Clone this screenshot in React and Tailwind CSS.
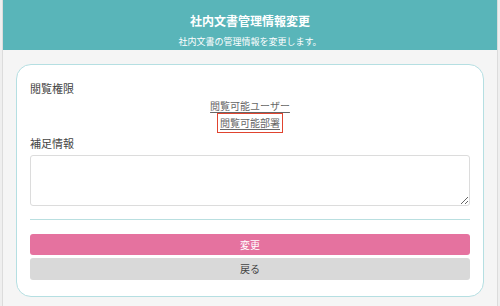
import React from "react";

// Edit form for internal document management info
function App() {
  return (
    <div
      className="w-[500px] h-[306px] bg-[#efefef] px-[2px] overflow-hidden"
      style={{ fontFamily: '"Noto Sans CJK JP", "Noto Sans", sans-serif' }}
    >
      <div className="h-full bg-[#f5f5f5] border-x border-[#dcdcdc]">
        {/* Header */}
        <div className="h-[50px] bg-[#59b5b9] text-white flex flex-col items-center">
          <div className="mt-[13px] h-[16px] leading-[16px] text-[12px] font-bold">
            社内文書管理情報変更
          </div>
          <div className="mt-[7px] h-[12px] leading-[12px] text-[9px]">
            社内文書の管理情報を変更します。
          </div>
        </div>

        {/* Card */}
        <div className="mx-[13px] mt-[14px] bg-white border border-[#b5dfe2] rounded-[15px] px-[13px] pt-[15px] pb-[16px]">
          <div className="h-[16px] leading-[16px] text-[11px] text-[#444]">閲覧権限</div>

          <div className="flex flex-col items-center text-[10px] text-[#666]">
            <div className="mt-[2px] h-[15px] leading-[15px] underline underline-offset-2">
              閲覧可能ユーザー
            </div>
            <div className="h-[20px] leading-[18px] border border-[#e0442f] px-[2px] underline underline-offset-2">
              閲覧可能部署
            </div>
          </div>

          <div className="mt-[2px] h-[16px] leading-[16px] text-[11px] text-[#444]">補足情報</div>

          <textarea className="mt-[4px] block w-full h-[51px] border border-[#dcdcdc] rounded-[3px] bg-white resize-y" />

          <div className="mt-[13px] border-t border-[#b9dfe0]" />

          <button className="mt-[14px] block w-full h-[21px] rounded-[3px] bg-[#e5729f] text-white text-[10px] leading-[21px]">
            変更
          </button>
          <button className="mt-[3px] block w-full h-[22px] rounded-[3px] bg-[#d9d9d9] text-[#444] text-[10px] leading-[22px]">
            戻る
          </button>
        </div>
      </div>
    </div>
  );
}

export default App;
